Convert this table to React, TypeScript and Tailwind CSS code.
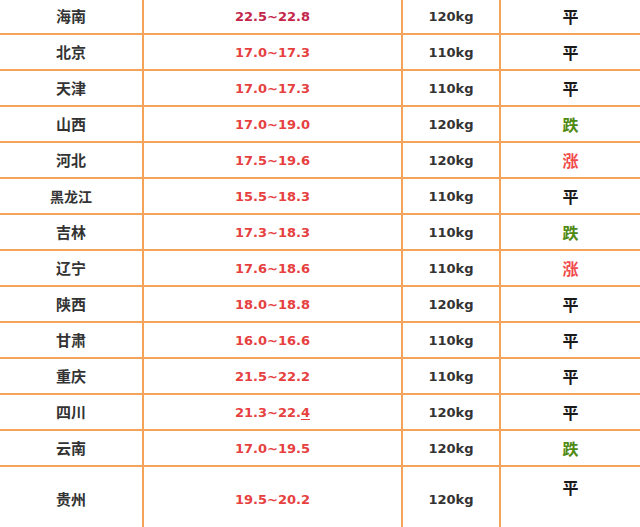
const rows = [
  { city: '海南', price: '22.5~22.8', weight: '120kg', trend: '平', dark: true },
  { city: '北京', price: '17.0~17.3', weight: '110kg', trend: '平' },
  { city: '天津', price: '17.0~17.3', weight: '110kg', trend: '平' },
  { city: '山西', price: '17.0~19.0', weight: '120kg', trend: '跌' },
  { city: '河北', price: '17.5~19.6', weight: '120kg', trend: '涨' },
  { city: '黑龙江', price: '15.5~18.3', weight: '110kg', trend: '平', small: true },
  { city: '吉林', price: '17.3~18.3', weight: '110kg', trend: '跌' },
  { city: '辽宁', price: '17.6~18.6', weight: '110kg', trend: '涨' },
  { city: '陕西', price: '18.0~18.8', weight: '120kg', trend: '平' },
  { city: '甘肃', price: '16.0~16.6', weight: '110kg', trend: '平' },
  { city: '重庆', price: '21.5~22.2', weight: '110kg', trend: '平' },
  { city: '四川', price: '21.3~22.4', weight: '120kg', trend: '平', underline: true },
  { city: '云南', price: '17.0~19.5', weight: '120kg', trend: '跌' },
]

const cjk = "font-['Noto_Sans_CJK_SC','Noto_Sans',sans-serif]"
const num = "font-['DejaVu_Sans',sans-serif]"

function trendColor (t: string) {
  if (t === '跌') return 'text-[#4f8a12]'
  if (t === '涨') return 'text-[#f04a4a]'
  return 'text-[#1a1a1a]'
}

function Price ({ value, underline, dark }: { value: string, underline?: boolean, dark?: boolean }) {
  const color = dark ? 'text-[#c4264a]' : 'text-[#e6403f]'
  if (!underline) return <span className={color}>{value}</span>
  return (
    <span className={color}>
      {value.slice(0, -1)}
      <span className="underline decoration-[#e6403f] decoration-1 underline-offset-2">{value.slice(-1)}</span>
    </span>
  )
}

export default function App () {
  return (
    <div className="w-[640px] h-[527px] overflow-hidden bg-white">
      <div className="-mt-[1px]">
        {rows.map((r) => (
          <div key={r.city} className="flex h-[36px] border-b-2 border-[#f3a35a]">
            <div className={`w-[144px] border-r-2 border-[#f3a35a] flex items-center justify-center ${cjk} font-bold text-[#333] ${r.small ? 'text-[14px] font-semibold' : 'text-[15px]'}`}>
              {r.city}
            </div>
            <div className={`w-[259px] border-r-2 border-[#f3a35a] flex items-center justify-center pt-[2px] ${num} font-bold text-[13px]`}>
              <Price value={r.price} underline={r.underline} dark={r.dark} />
            </div>
            <div className={`w-[98px] border-r-2 border-[#f3a35a] flex items-center justify-center pt-[2px] ${num} font-bold text-[13px] text-[#333]`}>
              {r.weight}
            </div>
            <div className={`flex-1 flex items-center justify-center ${cjk} font-bold text-[16px] ${trendColor(r.trend)}`}>
              {r.trend}
            </div>
          </div>
        ))}
        <div className="flex h-[64px]">
          <div className={`w-[144px] border-r-2 border-[#f3a35a] flex items-center justify-center ${cjk} font-bold text-[15px] text-[#333]`}>
            贵州
          </div>
          <div className={`w-[259px] border-r-2 border-[#f3a35a] flex items-center justify-center pt-[2px] ${num} font-bold text-[13px]`}>
            <Price value="19.5~20.2" />
          </div>
          <div className={`w-[98px] border-r-2 border-[#f3a35a] flex items-center justify-center pt-[2px] ${num} font-bold text-[13px] text-[#333]`}>
            120kg
          </div>
          <div className={`flex-1 flex justify-center pt-[8px] ${cjk} font-bold text-[16px] text-[#1a1a1a]`}>
            平
          </div>
        </div>
      </div>
    </div>
  )
}
